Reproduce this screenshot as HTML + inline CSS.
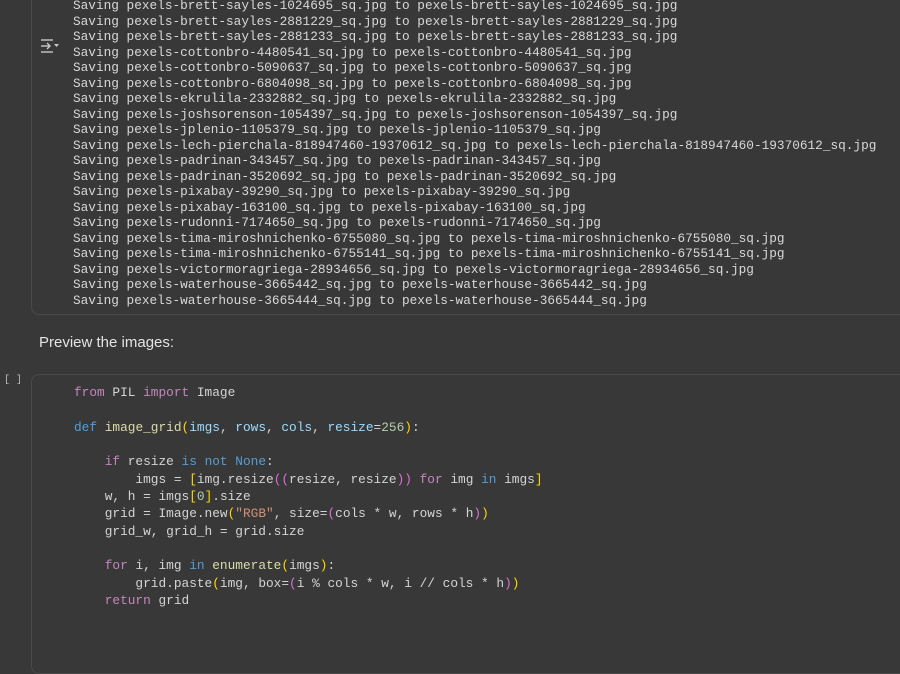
<!DOCTYPE html>
<html><head><style>
html,body{margin:0;padding:0;width:900px;height:612px;overflow:hidden;background:#383838;}
.out{position:absolute;left:31px;top:-20px;width:900px;height:335px;border:1px solid #4a4a4a;border-radius:8px;box-sizing:border-box;}
.otext{position:absolute;left:73px;top:-2px;font-family:"Liberation Mono",monospace;font-size:12.75px;line-height:15.5px;color:#d8d8d8;white-space:pre;}
.icon{position:absolute;left:40px;top:38px;}
.prev{position:absolute;left:39px;top:334px;font-family:"Liberation Sans",sans-serif;font-size:15px;color:#e3e3e3;}
.br{position:absolute;left:4px;top:375px;font-family:"Liberation Mono",monospace;font-size:10px;color:#bbb;}
.code{position:absolute;left:31px;top:374px;width:900px;height:300px;border:1px solid #4a4a4a;border-radius:8px;box-sizing:border-box;}
.ctext{position:absolute;left:74px;top:384px;font-family:"Liberation Mono",monospace;font-size:12.8px;line-height:17.35px;color:#d4d4d4;white-space:pre;}
.k{color:#c586c0}.b{color:#569cd6}.f{color:#dcdcaa}.y{color:#ffd700}.p{color:#da70d6}.s{color:#ce9178}.n{color:#b5cea8}.v{color:#9cdcfe}
</style></head><body>
<div class="out"></div>
<svg class="icon" width="20" height="16" viewBox="0 0 20 16"><g stroke="#c8c8c8" stroke-width="1.4" fill="none"><line x1="1" y1="2" x2="13" y2="2"/><line x1="1" y1="14" x2="13" y2="14"/><line x1="1" y1="8" x2="10" y2="8"/><polyline points="7,5 10,8 7,11"/></g><polygon points="14,6 19,6 16.5,9" fill="#c8c8c8"/></svg>
<div class="otext">Saving pexels-brett-sayles-1024695_sq.jpg to pexels-brett-sayles-1024695_sq.jpg
Saving pexels-brett-sayles-2881229_sq.jpg to pexels-brett-sayles-2881229_sq.jpg
Saving pexels-brett-sayles-2881233_sq.jpg to pexels-brett-sayles-2881233_sq.jpg
Saving pexels-cottonbro-4480541_sq.jpg to pexels-cottonbro-4480541_sq.jpg
Saving pexels-cottonbro-5090637_sq.jpg to pexels-cottonbro-5090637_sq.jpg
Saving pexels-cottonbro-6804098_sq.jpg to pexels-cottonbro-6804098_sq.jpg
Saving pexels-ekrulila-2332882_sq.jpg to pexels-ekrulila-2332882_sq.jpg
Saving pexels-joshsorenson-1054397_sq.jpg to pexels-joshsorenson-1054397_sq.jpg
Saving pexels-jplenio-1105379_sq.jpg to pexels-jplenio-1105379_sq.jpg
Saving pexels-lech-pierchala-818947460-19370612_sq.jpg to pexels-lech-pierchala-818947460-19370612_sq.jpg
Saving pexels-padrinan-343457_sq.jpg to pexels-padrinan-343457_sq.jpg
Saving pexels-padrinan-3520692_sq.jpg to pexels-padrinan-3520692_sq.jpg
Saving pexels-pixabay-39290_sq.jpg to pexels-pixabay-39290_sq.jpg
Saving pexels-pixabay-163100_sq.jpg to pexels-pixabay-163100_sq.jpg
Saving pexels-rudonni-7174650_sq.jpg to pexels-rudonni-7174650_sq.jpg
Saving pexels-tima-miroshnichenko-6755080_sq.jpg to pexels-tima-miroshnichenko-6755080_sq.jpg
Saving pexels-tima-miroshnichenko-6755141_sq.jpg to pexels-tima-miroshnichenko-6755141_sq.jpg
Saving pexels-victormoragriega-28934656_sq.jpg to pexels-victormoragriega-28934656_sq.jpg
Saving pexels-waterhouse-3665442_sq.jpg to pexels-waterhouse-3665442_sq.jpg
Saving pexels-waterhouse-3665444_sq.jpg to pexels-waterhouse-3665444_sq.jpg</div>
<div class="prev">Preview the images:</div>
<div class="br">[ ]</div>
<div class="code"></div>
<div class="ctext"><span class="k">from</span> PIL <span class="k">import</span> Image

<span class="b">def</span> <span class="f">image_grid</span><span class="y">(</span><span class="v">imgs</span>, <span class="v">rows</span>, <span class="v">cols</span>, <span class="v">resize</span>=<span class="n">256</span><span class="y">)</span>:

    <span class="k">if</span> resize <span class="b">is</span> <span class="b">not</span> <span class="b">None</span>:
        imgs = <span class="y">[</span>img.resize<span class="p">((</span>resize, resize<span class="p">))</span> <span class="k">for</span> img <span class="b">in</span> imgs<span class="y">]</span>
    w, h = imgs<span class="y">[</span><span class="n">0</span><span class="y">]</span>.size
    grid = Image.new<span class="y">(</span><span class="s">"RGB"</span>, size=<span class="p">(</span>cols * w, rows * h<span class="p">)</span><span class="y">)</span>
    grid_w, grid_h = grid.size

    <span class="k">for</span> i, img <span class="b">in</span> <span class="f">enumerate</span><span class="y">(</span>imgs<span class="y">)</span>:
        grid.paste<span class="y">(</span>img, box=<span class="p">(</span>i % cols * w, i // cols * h<span class="p">)</span><span class="y">)</span>
    <span class="k">return</span> grid</div>
</body></html>
